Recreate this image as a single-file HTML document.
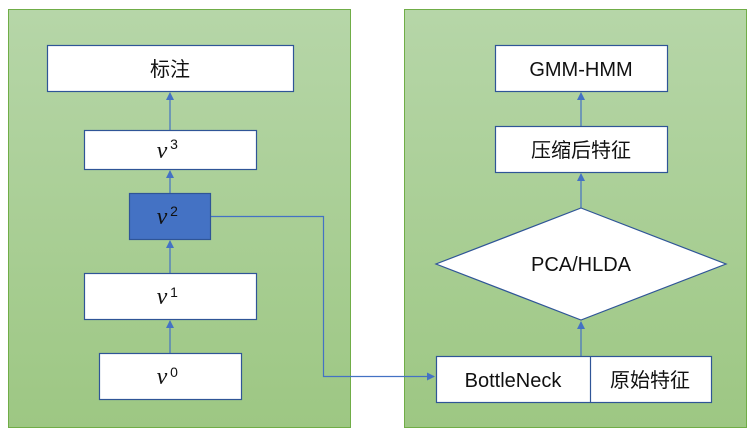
<!DOCTYPE html><html><head><style>body{margin:0;background:#fff;width:754px;height:434px;overflow:hidden}</style></head><body>
<svg width="754" height="434" xmlns="http://www.w3.org/2000/svg" font-family="Liberation Sans, Noto Sans CJK SC, sans-serif">
<defs><linearGradient id="g" x1="0" y1="0" x2="0" y2="1"><stop offset="0" stop-color="#b6d6a8"/><stop offset="1" stop-color="#9dc783"/></linearGradient>
<marker id="a" markerWidth="8" markerHeight="8" refX="7" refY="4" orient="auto" markerUnits="userSpaceOnUse"><path d="M0,0L8,4L0,8z" fill="#4472c4"/></marker></defs>
<rect x="8.5" y="9.5" width="342" height="418" fill="url(#g)" stroke="#70ad47"/>
<rect x="404.5" y="9.5" width="342" height="418" fill="url(#g)" stroke="#70ad47"/>
<g stroke="#4472c4" stroke-width="1.2" fill="none">
<line x1="170" y1="130" x2="170" y2="93" marker-end="url(#a)"/>
<line x1="170" y1="193" x2="170" y2="171" marker-end="url(#a)"/>
<line x1="170" y1="273" x2="170" y2="241" marker-end="url(#a)"/>
<line x1="170" y1="353" x2="170" y2="321" marker-end="url(#a)"/>
<line x1="581" y1="126" x2="581" y2="93" marker-end="url(#a)"/>
<line x1="581" y1="208" x2="581" y2="174" marker-end="url(#a)"/>
<line x1="581" y1="356" x2="581" y2="322" marker-end="url(#a)"/>
<polyline points="210,216.5 323.5,216.5 323.5,376.5 434,376.5" marker-end="url(#a)"/>
</g>
<g stroke="#2f5597" stroke-width="1.2" fill="#fff">
<rect x="47.5" y="45.5" width="246" height="46"/>
<rect x="84.5" y="130.5" width="172" height="39"/>
<rect x="129.5" y="193.5" width="81" height="46" fill="#4472c4"/>
<rect x="84.5" y="273.5" width="172" height="46"/>
<rect x="99.5" y="353.5" width="142" height="46"/>
<rect x="495.5" y="45.5" width="172" height="46"/>
<rect x="495.5" y="126.5" width="172" height="46"/>
<polygon points="581,208 726,264 581,320 436,264"/>
<rect x="436.5" y="356.5" width="275" height="46"/>
<line x1="590.5" y1="356" x2="590.5" y2="402"/>
</g>
<g font-size="20" text-anchor="middle" fill="#111">
<text x="170" y="76">标注</text>
<g font-family="Liberation Serif, serif" font-style="italic" font-size="24">
<text x="162" y="158">v</text><text x="162" y="224">v</text><text x="162" y="304">v</text><text x="162" y="384">v</text></g>
<g font-size="14"><text x="174" y="149">3</text><text x="174" y="216">2</text><text x="174" y="297">1</text><text x="174" y="377">0</text></g>
<text x="581" y="76">GMM-HMM</text>
<text x="581" y="157">压缩后特征</text>
<text x="581" y="271">PCA/HLDA</text>
<text x="513" y="387">BottleNeck</text>
<text x="650" y="387">原始特征</text>
</g>
</svg></body></html>
